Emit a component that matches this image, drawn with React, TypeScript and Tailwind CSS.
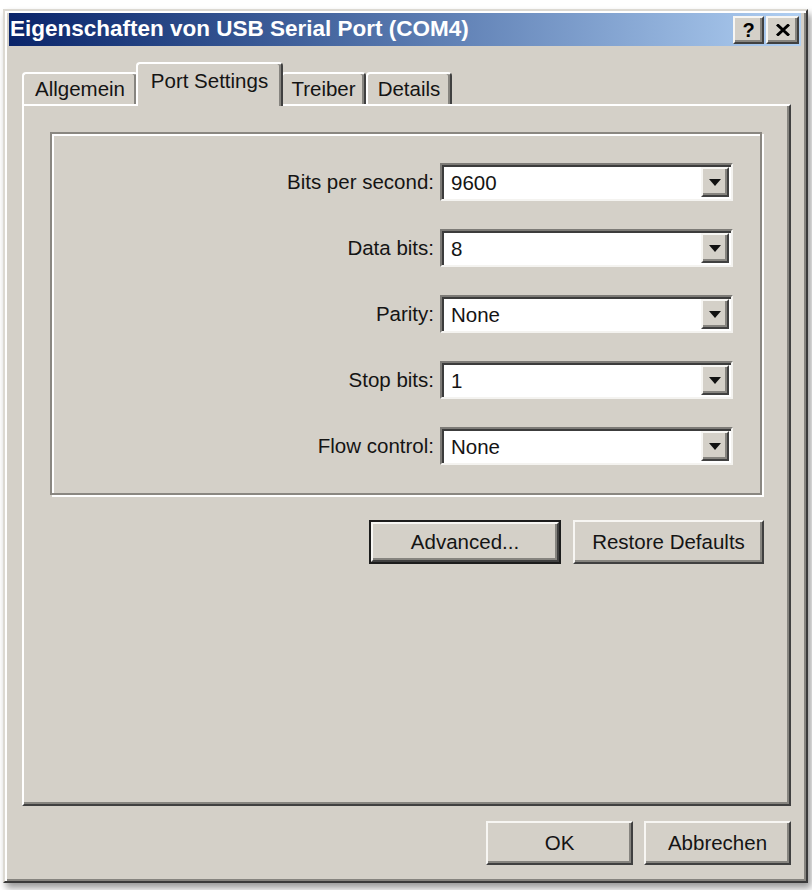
import React from 'react'

const raised =
  'border-2 border-t-[#f7f6f3] border-l-[#f7f6f3] border-r-[#404040] border-b-[#404040] shadow-[inset_-2px_-2px_0_#86847f]'

interface ComboProps {
  label: string
  value: string
}

const Combo: React.FC<ComboProps> = (props) => {
  const { label, value } = props
  return (
    <div className="grid grid-cols-[382px_293px] gap-x-[6px] items-center">
      <span className="text-right whitespace-nowrap">{label}</span>
      <div className="h-[38px] flex bg-white border-2 border-t-[#7d7b77] border-l-[#7d7b77] border-r-[#f4f3f0] border-b-[#f4f3f0] shadow-[inset_2px_2px_0_#3c3c3c] p-[2px]">
        <span className="flex-1 pl-[7px] leading-[31px]">{value}</span>
        <div className={`w-[28px] bg-[#d4d0c8] flex items-center justify-center ${raised}`}>
          <svg width="12" height="7" viewBox="0 0 12 7">
            <polygon points="0,0 12,0 6,7" fill="#111" />
          </svg>
        </div>
      </div>
    </div>
  )
}

interface TabProps {
  label: string
  width: number
  active?: boolean
}

const Tab: React.FC<TabProps> = (props) => {
  const { label, active } = props
  const size = active
    ? 'h-[44px] -mb-[2px] z-10 bg-[#d4d0c8] -mx-[2px] pt-[5px]'
    : 'h-[32px] pt-[3px]'
  return (
    <div
      className={`relative ${size} border-t-2 border-l-2 border-white border-r-2 border-r-[#404040] shadow-[inset_-2px_0_0_#86847f] rounded-t-[4px] text-center leading-[24px] whitespace-nowrap`}
      style={{ width: props.width }}
    >
      {label}
    </div>
  )
}

const Button: React.FC<{ label: string; width: string; isDefault?: boolean }> = (props) => {
  const { label, width, isDefault } = props
  if (isDefault) {
    return (
      <div className={`${width} h-[44px] border-2 border-[#1c1c1c] flex`}>
        <div className={`flex-1 bg-[#d4d0c8] flex items-center justify-center ${raised}`}>
          {label}
        </div>
      </div>
    )
  }
  return (
    <div className={`${width} h-[44px] bg-[#d4d0c8] flex items-center justify-center ${raised}`}>
      {label}
    </div>
  )
}

export default function App() {
  const rows = [
    { label: 'Bits per second:', value: '9600' },
    { label: 'Data bits:', value: '8' },
    { label: 'Parity:', value: 'None' },
    { label: 'Stop bits:', value: '1' },
    { label: 'Flow control:', value: 'None' },
  ]

  return (
    <div className="min-h-[890px] bg-white pt-[9px] pl-[3px] font-['Liberation_Sans',Arial,sans-serif] text-[20.5px] text-[#141414]">
      <div className="w-[805px] h-[874px] bg-[#d4d0c8] border-2 border-t-[#dcd9d2] border-l-[#dcd9d2] border-r-[#3a3a3a] border-b-[#3a3a3a] shadow-[inset_2px_2px_0_#ffffff,inset_-2px_-2px_0_#86847f,3px_5px_7px_rgba(0,0,0,0.4)] pt-[2px] pl-[4px] flex flex-col">
        {/* caption */}
        <div className="w-[792px] h-[33px] bg-gradient-to-r from-[#0a246a] to-[#b0cff2] flex items-center pl-[1px] pr-[2px]">
          <span className="flex-1 text-white font-bold text-[22.5px] leading-none">
            Eigenschaften von USB Serial Port (COM4)
          </span>
          <div className={`w-[31px] h-[28px] bg-[#d4d0c8] flex items-center justify-center font-bold text-[20px] text-black ${raised}`}>
            ?
          </div>
          <div className={`ml-[2px] w-[33px] h-[28px] bg-[#d4d0c8] flex items-center justify-center ${raised}`}>
            <svg width="14" height="12" viewBox="0 0 14 12">
              <path d="M1 0.5 L13 11.5 M13 0.5 L1 11.5" stroke="#000" strokeWidth="3" />
            </svg>
          </div>
        </div>

        <div className="ml-[13px] w-[769px] mt-[16px]">
          {/* tab strip */}
          <div className="h-[42px] flex items-end">
            <Tab label="Allgemein" width={116} />
            <Tab label="Port Settings" width={147} active />
            <Tab label="Treiber" width={85} />
            <Tab label="Details" width={86} />
          </div>

          {/* tab page */}
          <div className="h-[702px] border-2 border-t-white border-l-white border-r-[#404040] border-b-[#404040] shadow-[inset_-2px_-2px_0_#86847f] pt-[26px] pl-[26px]">
            <div className="w-[712px] h-[363px] border-2 border-[#8a8781] shadow-[inset_2px_2px_0_#fff,2px_2px_0_#fff] pt-[29px] flex flex-col gap-[28px]">
              {rows.map((row) => (
                <Combo key={row.label} label={row.label} value={row.value} />
              ))}
            </div>
            <div className="w-[714px] mt-[25px] flex justify-end gap-[12px]">
              <Button label="Advanced..." width="w-[192px]" isDefault />
              <Button label="Restore Defaults" width="w-[191px]" />
            </div>
          </div>

          <div className="mt-[15px] flex justify-end gap-[11px]">
            <Button label="OK" width="w-[147px]" />
            <Button label="Abbrechen" width="w-[147px]" />
          </div>
        </div>
      </div>
    </div>
  )
}
